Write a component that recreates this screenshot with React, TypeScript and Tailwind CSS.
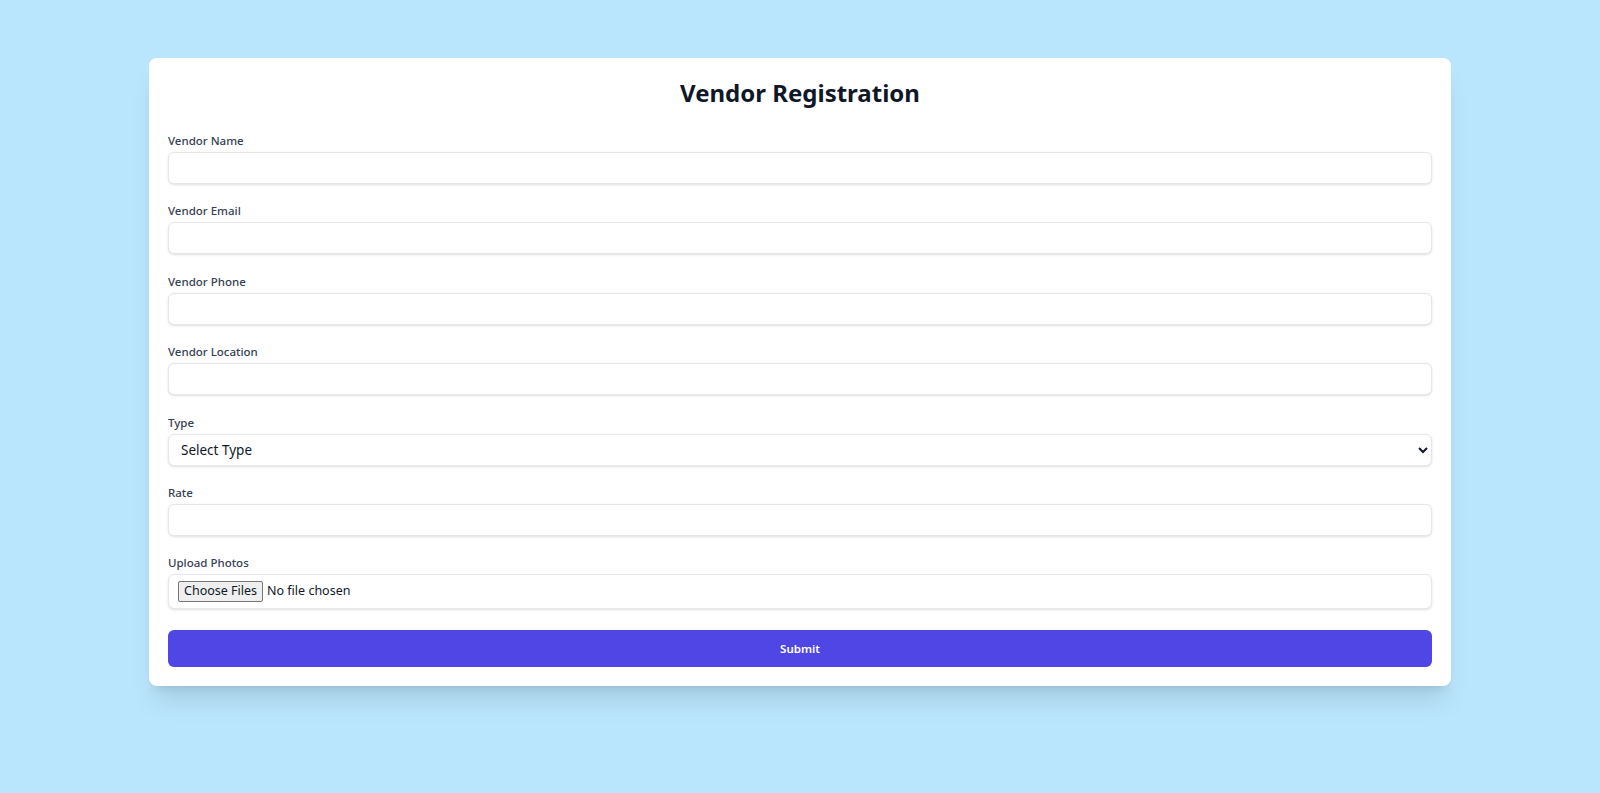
import React from "react";

const labelCls = "block text-[11.5px] leading-4 font-medium text-gray-700 mb-[3px]";
const inputCls =
  "block w-full h-[32px] rounded-md border border-gray-200 bg-white px-3 text-[14px] text-gray-900 shadow-sm outline-none";

function Field({ label, children }: { label: string; children: React.ReactNode }) {
  return (
    <div className="mb-[19.4px]">
      <label className={labelCls}>{label}</label>
      {children}
    </div>
  );
}

export default function App() {
  return (
    <div
      className="min-h-[793px] w-full bg-[#bae6fd] pt-[58px] px-[149px]"
      style={{ fontFamily: '"Noto Sans", "Open Sans", sans-serif' }}
    >
      <div className="w-full rounded-lg bg-white px-[19px] pt-[19px] pb-[19px] shadow-xl">
        <h1 className="mb-6 text-center text-[24px] leading-8 font-bold text-gray-900">
          Vendor Registration
        </h1>
        <Field label="Vendor Name">
          <input type="text" className={inputCls} />
        </Field>
        <Field label="Vendor Email">
          <input type="email" className={inputCls} />
        </Field>
        <Field label="Vendor Phone">
          <input type="text" className={inputCls} />
        </Field>
        <Field label="Vendor Location">
          <input type="text" className={inputCls} />
        </Field>
        <Field label="Type">
          <select
            className="block w-full h-[32px] rounded-md border border-gray-200 bg-white pl-[8px] pr-2 text-[13.5px] text-gray-900 shadow-sm outline-none"
            defaultValue=""
          >
            <option value="">Select Type</option>
            <option value="a">Catering</option>
            <option value="b">Decoration</option>
          </select>
        </Field>
        <Field label="Rate">
          <input type="number" className={inputCls} />
        </Field>
        <div className="mb-[21px]">
          <label className={labelCls}>Upload Photos</label>
          <input
            type="file"
            multiple
            className="block w-full h-[35px] rounded-md border border-gray-200 bg-white px-[9px] py-[6px] text-[12.5px] text-gray-900 shadow-sm file:mr-1 file:h-[21px] file:rounded-[2px] file:border file:border-[#767676] file:bg-[#efefef] file:px-[5px] file:text-[12.5px] file:text-gray-900"
          />
        </div>
        <button
          type="button"
          className="block w-full h-[37px] rounded-md bg-[#4f46e5] text-[11.5px] font-semibold text-white"
        >
          Submit
        </button>
      </div>
    </div>
  );
}
